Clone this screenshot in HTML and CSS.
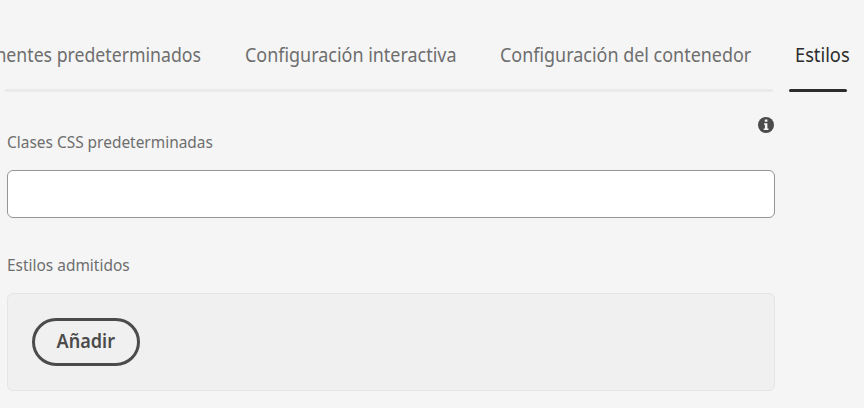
FILE: index.html
```html
<!DOCTYPE html>
<html lang="es">
<head>
<meta charset="utf-8">
<title>Estilos</title>
<link rel="stylesheet" href="styles.css">
</head>
<body>
<nav class="tabs" role="tablist">
  <span class="tab tab-components" role="tab">Componentes predeterminados</span>
  <span class="tab tab-interactive" role="tab">Configuración interactiva</span>
  <span class="tab tab-container" role="tab">Configuración del contenedor</span>
  <span class="tab tab-styles selected" role="tab" aria-selected="true">Estilos</span>
</nav>
<div class="rules"><div class="rule"></div><div class="indicator"></div></div>
<main class="panel">
  <div class="field-head">
    <label class="label label-classes" for="classes">Clases CSS predeterminadas</label>
    <svg class="info" viewBox="0 0 16 16" width="16" height="16">
      <circle cx="8" cy="8" r="8"/>
      <path d="M6.8 2.6h2.6v2.2H6.8zM6 6.2h3.4v5.2h1.1v1.6H5.7v-1.6h1.2V7.8H6z"/>
    </svg>
  </div>
  <input class="input" id="classes" type="text">
  <div class="label label-styles">Estilos admitidos</div>
  <section class="well"><button class="add" type="button"><span>Añadir</span></button></section>
</main>
</body>
</html>
```

FILE: styles.css
```css
* { box-sizing: border-box; }
body {
  margin: 0;
  height: 408px;
  overflow: hidden;
  background: #f5f5f5;
  color: #6e6e6e;
  font-family: "Noto Sans", sans-serif;
}
.tabs {
  display: flex;
  justify-content: flex-end;
  gap: 44px;
  height: 89px;
  padding: 41px 14px 0 0;
  overflow: hidden;
}
.tab {
  flex: none;
  font-size: 19.5px;
  line-height: 28px;
  white-space: nowrap;
  transform: scaleX(.92);
  transform-origin: left;
}
.tab-components {
  display: flex;
  justify-content: flex-end;
  width: 270px;
  transform: scaleX(.907);
  transform-origin: right;
}
.tab-interactive { width: 211px; }
.tab-container { width: 251px; }
.tab-styles { width: 55px; }
.selected { color: #2c2c2c; transform: scaleX(.935); }
.rules { display: flex; gap: 16px; height: 3px; padding-left: 5px; }
.rule { width: 768px; background: #eaeaea; }
.indicator { width: 58px; background: #2c2c2c; border-radius: 2px; }
.panel { width: 768px; margin-left: 7px; }
.field-head {
  display: flex;
  justify-content: space-between;
  height: 78px;
  padding-top: 25px;
}
.label {
  font-size: 17px;
  line-height: 24px;
  white-space: nowrap;
  transform: scaleX(.908);
  transform-origin: left;
}
.label-classes { margin-top: 13px; }
.info { margin: 0 1px 0 0; fill: #4b4b4b; }
.info path { fill: #f5f5f5; }
.input {
  display: block;
  width: 768px;
  height: 48px;
  padding: 0 16px;
  background: #fff;
  border: 1px solid #959595;
  border-radius: 6px;
}
.label-styles { margin-top: 35px; }
.well {
  height: 98px;
  margin-top: 16px;
  padding: 24px;
  background: #f0f0f0;
  border: 1px solid #e5e5e5;
  border-radius: 6px;
}
.add {
  width: 108px;
  height: 48px;
  padding: 0 0 2px;
  background: transparent;
  border: 3px solid #4b4b4b;
  border-radius: 24px;
  color: #4b4b4b;
  font: inherit;
  font-size: 19px;
  font-weight: 600;
  line-height: 24px;
}
.add span { display: inline-block; transform: scaleX(.95); }
```
